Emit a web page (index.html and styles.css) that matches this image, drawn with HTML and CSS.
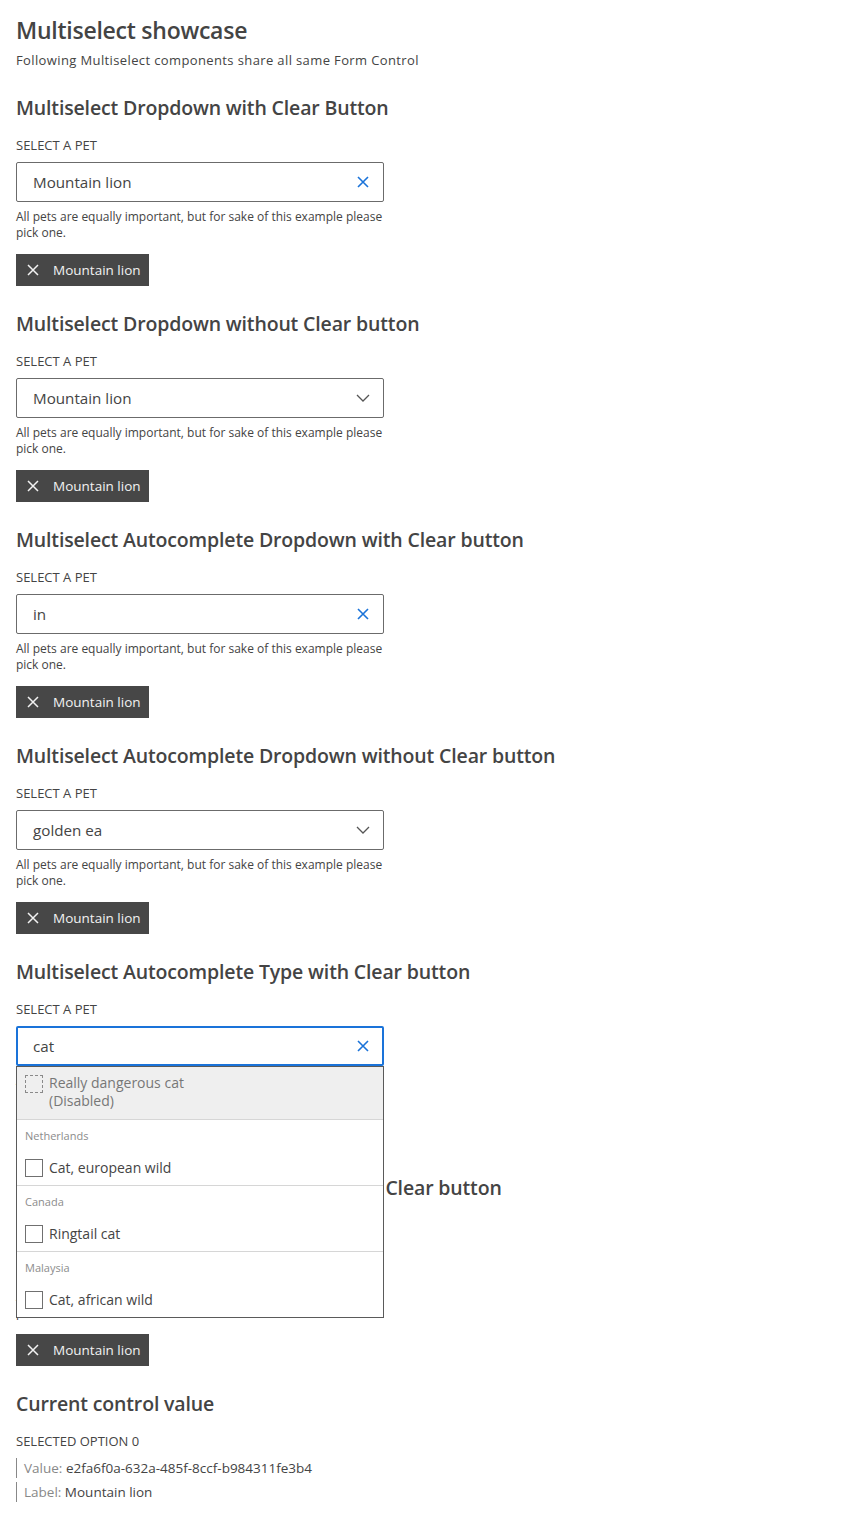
FILE: index.html
```
<!DOCTYPE html>
<html lang="en">
<head>
<meta charset="utf-8">
<title>Multiselect showcase</title>
<link rel="stylesheet" href="styles.css">
</head>
<body>
<main class="page">
  <h1 class="page-title">Multiselect showcase</h1>
  <p class="page-sub">Following Multiselect components share all same Form Control</p>

  <section class="demo">
    <h2 class="demo-title">Multiselect Dropdown with Clear Button</h2>
    <div class="field">
      <label class="field-label">Select a pet</label>
      <div class="control">
        <span class="control-text">Mountain lion</span>
        <svg class="icon-clear" viewBox="0 0 12 12" width="12" height="12"><path d="M1 1L11 11M11 1L1 11" stroke="currentColor" stroke-width="1.6" fill="none"/></svg>
      </div>
      <p class="helper">All pets are equally important, but for sake of this example please pick one.</p>
      <div class="chips">
        <span class="chip"><svg class="chip-x" viewBox="0 0 12 12" width="12" height="12"><path d="M1 1L11 11M11 1L1 11" stroke="currentColor" stroke-width="1.5" fill="none"/></svg>Mountain lion</span>
      </div>
    </div>
  </section>

  <section class="demo">
    <h2 class="demo-title">Multiselect Dropdown without Clear button</h2>
    <div class="field">
      <label class="field-label">Select a pet</label>
      <div class="control">
        <span class="control-text">Mountain lion</span>
        <svg class="icon-chevron" viewBox="0 0 14 8" width="14" height="8"><path d="M1 1L7 7L13 1" stroke="currentColor" stroke-width="1.3" fill="none"/></svg>
      </div>
      <p class="helper">All pets are equally important, but for sake of this example please pick one.</p>
      <div class="chips">
        <span class="chip"><svg class="chip-x" viewBox="0 0 12 12" width="12" height="12"><path d="M1 1L11 11M11 1L1 11" stroke="currentColor" stroke-width="1.5" fill="none"/></svg>Mountain lion</span>
      </div>
    </div>
  </section>

  <section class="demo">
    <h2 class="demo-title">Multiselect Autocomplete Dropdown with Clear button</h2>
    <div class="field">
      <label class="field-label">Select a pet</label>
      <div class="control">
        <span class="control-text">in</span>
        <svg class="icon-clear" viewBox="0 0 12 12" width="12" height="12"><path d="M1 1L11 11M11 1L1 11" stroke="currentColor" stroke-width="1.6" fill="none"/></svg>
      </div>
      <p class="helper">All pets are equally important, but for sake of this example please pick one.</p>
      <div class="chips">
        <span class="chip"><svg class="chip-x" viewBox="0 0 12 12" width="12" height="12"><path d="M1 1L11 11M11 1L1 11" stroke="currentColor" stroke-width="1.5" fill="none"/></svg>Mountain lion</span>
      </div>
    </div>
  </section>

  <section class="demo">
    <h2 class="demo-title">Multiselect Autocomplete Dropdown without Clear button</h2>
    <div class="field">
      <label class="field-label">Select a pet</label>
      <div class="control">
        <span class="control-text">golden ea</span>
        <svg class="icon-chevron" viewBox="0 0 14 8" width="14" height="8"><path d="M1 1L7 7L13 1" stroke="currentColor" stroke-width="1.3" fill="none"/></svg>
      </div>
      <p class="helper">All pets are equally important, but for sake of this example please pick one.</p>
      <div class="chips">
        <span class="chip"><svg class="chip-x" viewBox="0 0 12 12" width="12" height="12"><path d="M1 1L11 11M11 1L1 11" stroke="currentColor" stroke-width="1.5" fill="none"/></svg>Mountain lion</span>
      </div>
    </div>
  </section>

  <section class="demo">
    <h2 class="demo-title">Multiselect Autocomplete Type with Clear button</h2>
    <div class="field">
      <label class="field-label">Select a pet</label>
      <div class="control-wrap">
        <div class="control is-focused">
          <span class="control-text">cat</span>
          <svg class="icon-clear" viewBox="0 0 12 12" width="12" height="12"><path d="M1 1L11 11M11 1L1 11" stroke="currentColor" stroke-width="1.6" fill="none"/></svg>
        </div>
        <div class="listbox">
          <div class="option is-disabled">
            <span class="check check-dashed"></span>
            <span class="option-text">Really dangerous cat<br>(Disabled)</span>
          </div>
          <div class="group">
            <div class="group-label">Netherlands</div>
            <div class="option"><span class="check"></span><span class="option-text">Cat, european wild</span></div>
          </div>
          <div class="group">
            <div class="group-label">Canada</div>
            <div class="option"><span class="check"></span><span class="option-text">Ringtail cat</span></div>
          </div>
          <div class="group">
            <div class="group-label">Malaysia</div>
            <div class="option"><span class="check"></span><span class="option-text">Cat, african wild</span></div>
          </div>
        </div>
      </div>
      <p class="helper">All pets are equally important, but for sake of this example please pick one.</p>
      <div class="chips">
        <span class="chip"><svg class="chip-x" viewBox="0 0 12 12" width="12" height="12"><path d="M1 1L11 11M11 1L1 11" stroke="currentColor" stroke-width="1.5" fill="none"/></svg>Mountain lion</span>
      </div>
    </div>
  </section>

  <section class="demo">
    <h2 class="demo-title">Multiselect Autocomplete Type without Clear button</h2>
    <div class="field">
      <label class="field-label">Select a pet</label>
      <div class="control">
        <span class="control-text"></span>
        <svg class="icon-chevron" viewBox="0 0 14 8" width="14" height="8"><path d="M1 1L7 7L13 1" stroke="currentColor" stroke-width="1.3" fill="none"/></svg>
      </div>
      <p class="helper">All pets are equally important, but for sake of this example please pick one.</p>
      <div class="chips">
        <span class="chip"><svg class="chip-x" viewBox="0 0 12 12" width="12" height="12"><path d="M1 1L11 11M11 1L1 11" stroke="currentColor" stroke-width="1.5" fill="none"/></svg>Mountain lion</span>
      </div>
    </div>
  </section>

  <section class="demo">
    <h2 class="demo-title">Current control value</h2>
    <div class="field-label">Selected option 0</div>
    <div class="value-row"><span class="value-key">Value:</span> e2fa6f0a-632a-485f-8ccf-b984311fe3b4</div>
    <div class="value-row"><span class="value-key">Label:</span> Mountain lion</div>
  </section>
</main>
</body>
</html>
```
FILE: styles.css
```
* { box-sizing: border-box; }

html, body {
  margin: 0;
  padding: 0;
  background: #ffffff;
}

body {
  font-family: "Open Sans", "Noto Sans", sans-serif;
  color: #444444;
}

.page {
  padding: 15px 16px 30px;
}

.page-title {
  margin: 0;
  font-size: 23px;
  line-height: 30px;
  font-weight: 600;
  letter-spacing: -0.25px;
  color: #444444;
}

.page-sub {
  margin: 6px 0 0;
  font-size: 13px;
  line-height: 18px;
  letter-spacing: 0.38px;
}

.demo {
  margin-top: 26px;
}

.demo + .demo {
  margin-top: 25px;
}

.demo-title {
  margin: 0;
  font-size: 19.5px;
  line-height: 26px;
  font-weight: 600;
  letter-spacing: -0.15px;
  color: #444444;
}

.field {
  width: 368px;
}

.field-label {
  display: block;
  margin-top: 15px;
  font-size: 13px;
  line-height: 18px;
  text-transform: uppercase;
  color: #444444;
}

.control-wrap {
  position: relative;
}

.control {
  margin-top: 8px;
  height: 40px;
  border: 1px solid #6b6b6b;
  border-radius: 2px;
  display: flex;
  align-items: center;
  padding: 0 14px 0 16px;
  background: #fff;
}

.control.is-focused {
  border: 2px solid #1a73d9;
  padding-left: 15px;
  padding-right: 13px;
}

.control-text {
  flex: 1;
  font-size: 15.2px;
  color: #444444;
}

.icon-clear {
  color: #1a73d9;
}

.icon-chevron {
  color: #555555;
  margin-right: -1px;
}

.helper {
  margin: 7px 0 0;
  font-size: 12px;
  line-height: 16px;
  color: #444444;
}

.chips {
  margin-top: 13px;
  display: flex;
}

.chip {
  height: 32px;
  display: inline-flex;
  align-items: center;
  gap: 14px;
  padding: 0 8px 0 11px;
  background: #474747;
  color: #f2f2f2;
  font-size: 13.5px;
}

.listbox {
  position: absolute;
  left: 0;
  right: 0;
  top: 100%;
  background: #ffffff;
  border: 1px solid #5a5a5a;
  z-index: 2;
}

.option {
  display: flex;
  align-items: flex-start;
  gap: 6px;
  padding: 8px 8px;
  font-size: 14px;
  line-height: 18px;
  color: #444444;
}

.option.is-disabled {
  background: #efefef;
  color: #777777;
  padding: 7px 8px 9px;
}

.option.is-disabled .check {
  margin-top: 1px;
}

.check {
  width: 18px;
  height: 18px;
  flex: none;
  border: 1px solid #707070;
  background: #fff;
}

.check-dashed {
  border: 1px dashed #8a8a8a;
  background: transparent;
}

.group {
  border-top: 1px solid #d6d6d6;
}

.group-label {
  padding: 8px 8px 7px;
  font-size: 11px;
  line-height: 16px;
  font-weight: 400;
  color: #8c8c8c;
}

.value-row {
  margin-top: 4px;
  border-left: 1px solid #888888;
  padding-left: 7px;
  font-size: 13.5px;
  line-height: 20px;
  color: #444444;
}

.field-label + .value-row {
  margin-top: 8px;
}

.value-key {
  color: #888888;
}
```
